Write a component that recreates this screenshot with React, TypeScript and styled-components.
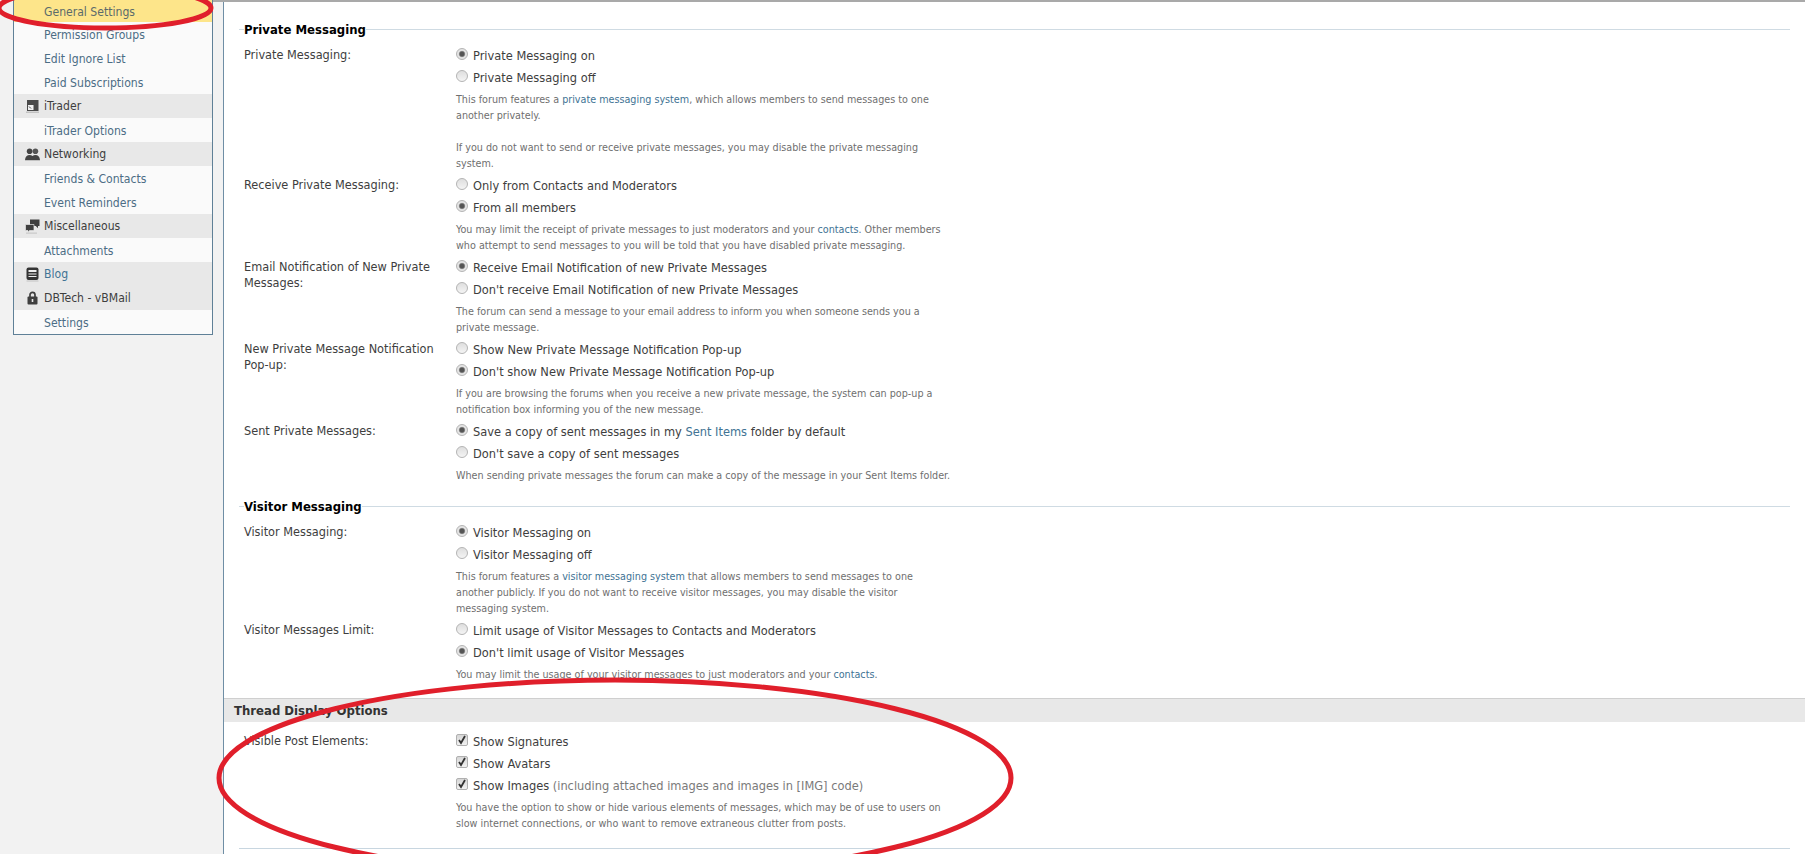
import React, { ReactNode } from 'react';
import styled, { createGlobalStyle } from 'styled-components';

const GlobalStyle = createGlobalStyle`
  html, body {
    margin: 0;
    padding: 0;
    background: #f2f2f2;
  }
  body {
    font-family: "DejaVu Sans Condensed", "DejaVu Sans", sans-serif;
    font-stretch: condensed;
    font-size: 12px;
    color: #3e3e3e;
  }
`;

const Page = styled.div`
  position: relative;
  display: flex;
  height: 854px;
  padding-left: 13px;
  box-sizing: border-box;
  overflow: hidden;
`;

const Sidebar = styled.nav`
  flex: none;
  width: 200px;
  height: 335px;
  box-sizing: border-box;
  border: 1px solid #5f8097;
  border-top: 0;
  background: #fafafa;
  font-size: 12.1px;
`;

const NavHeader = styled.div<{ $link?: boolean }>`
  display: flex;
  align-items: center;
  height: 24px;
  padding-left: 11px;
  background: #e8e8e8;
  color: ${(p) => (p.$link ? '#417394' : '#3e3e3e')};
`;

const NavItem = styled.div<{ $active?: boolean; $height?: number }>`
  display: flex;
  align-items: center;
  height: ${(p) => p.$height || 24}px;
  box-sizing: border-box;
  padding: 1px 0 0 30px;
  background: ${(p) => (p.$active ? '#fde58a' : 'transparent')};
  color: ${(p) => (p.$active ? '#5b6b6b' : '#4c6d85')};
`;

const IconBox = styled.svg`
  flex: none;
  width: 15px;
  height: 16px;
  margin: 0 4px 0 0;
`;

const Content = styled.div`
  flex: 1;
  display: flex;
  padding-left: 10px;
  border-top: 2px solid #a9a9a9;
`;

const Panel = styled.main`
  flex: 1;
  background: #fff;
  border-left: 1px solid #6f8ea5;
`;

const ClippedTop = styled.div`
  height: 3px;
  padding-left: 232px;
  overflow: hidden;
  display: flex;
  align-items: flex-end;
  font-size: 10.7px;
  line-height: 16px;
  color: #6f6f6f;
`;

const Section = styled.section`
  padding: 0 15px 0 15px;
`;

const SectionTitle = styled.h3<{ $top: number }>`
  display: flex;
  align-items: center;
  height: 18px;
  margin: ${(p) => p.$top}px 0 6px;
  font-size: 13px;
  font-weight: bold;
  color: #000;
  &::before {
    content: '';
    width: 5px;
    height: 1px;
    background: #cfdbe3;
  }
  &::after {
    content: '';
    flex: 1;
    height: 1px;
    background: #cfdbe3;
  }
`;

const Row = styled.div`
  display: grid;
  grid-template-columns: 217px 1fr;
  padding-bottom: 2px;
`;

const RowLabel = styled.div`
  padding: 3px 0 0 5px;
  width: 190px;
  font-size: 12.6px;
  line-height: 16px;
`;

const Option = styled.label`
  display: flex;
  align-items: center;
  height: 22px;
  gap: 5px;
  font-size: 12.7px;
`;

const Radio = styled.input.attrs({ type: 'radio' })`
  appearance: none;
  flex: none;
  width: 12px;
  height: 12px;
  margin: -3px 0 0;
  border: 1px solid #b4b4b4;
  border-radius: 50%;
  box-sizing: border-box;
  background: linear-gradient(#dedede, #f4f4f4);
  &:checked {
    background: radial-gradient(circle, #555 0 2px, #8f8f8f 2.8px, #e4e4e4 3.6px);
  }
`;

const Tick = styled.span`
  flex: none;
  display: flex;
  align-items: center;
  justify-content: center;
  width: 12px;
  height: 12px;
  margin-top: -3px;
  border: 1px solid #b0b0b0;
  border-radius: 2px;
  box-sizing: border-box;
  background: linear-gradient(#d6d6d6, #f2f2f2);
`;

const Note = styled.span`
  color: #7a7a7a;
`;

const Description = styled.p`
  margin: 4px 0 0;
  font-size: 10.7px;
  line-height: 16px;
  color: #6f6f6f;
  white-space: nowrap;
`;

const Link = styled.a`
  color: #417394;
`;

const BandHeader = styled.h2`
  display: flex;
  align-items: center;
  height: 23px;
  margin: 13px 0 8px;
  padding-left: 10px;
  border-top: 1px solid #cfcfcf;
  background: #e8e8e8;
  font-size: 13px;
  font-weight: bold;
  color: #333;
`;

const BottomRule = styled.hr`
  margin: 14px 0 0;
  border: 0;
  border-top: 1px solid #c8d6e0;
`;

const Annotations = styled.svg`
  position: absolute;
  left: 0;
  top: 0;
  width: 1805px;
  height: 854px;
  pointer-events: none;
`;

const TraderIcon = () => (
  <IconBox viewBox="0 0 15 16">
    <rect x="2" y="2" width="11.5" height="11" fill="#4a4a4a" />
    <rect x="3" y="7" width="5.5" height="5" fill="#f2f2f2" />
    <path d="M4 8.5l2 2" stroke="#4a4a4a" fill="none" />
    <rect x="1" y="13.5" width="13" height="1.5" fill="#c2c2c2" />
  </IconBox>
);

const PeopleIcon = () => (
  <IconBox viewBox="0 0 15 16">
    <circle cx="4.6" cy="5.2" r="2.8" fill="#444" />
    <circle cx="10.4" cy="5.2" r="2.8" fill="#555" />
    <path d="M0 14c.3-3.2 2-5 4.6-5 1.2 0 2.2.4 2.9 1.1.7-.7 1.7-1.1 2.9-1.1 2.6 0 4.3 1.8 4.6 5z" fill="#444" />
    <rect x="0" y="14" width="15" height="1" fill="#c2c2c2" />
  </IconBox>
);

const BubblesIcon = () => (
  <IconBox viewBox="0 0 15 16">
    <path d="M5 1.5h9.500v6.500H13v2.200L10.800 8H5z" fill="#3f3f3f" />
    <path d="M.5 6.500H9v6H4.500L3 14.300v-1.800H.5z" fill="#3f3f3f" stroke="#e8e8e8" strokeWidth=".7" />
    <rect x="1" y="14.6" width="11" height="1" fill="#c2c2c2" />
  </IconBox>
);

const BlogIcon = () => (
  <IconBox viewBox="0 0 15 16">
    <rect x="1.5" y="1.5" width="12" height="12.5" rx="2" fill="#333" />
    <rect x="3.5" y="4" width="8" height="2" fill="#eee" />
    <path d="M3.500 8h8M3.500 10.500h8" stroke="#eee" strokeWidth="1.1" />
    <rect x="1.5" y="14.5" width="12" height="1" fill="#c2c2c2" />
  </IconBox>
);

const LockIcon = () => (
  <IconBox viewBox="0 0 15 16">
    <path d="M5 7V4.800a2.500 2.500 0 0 1 5 0V7" stroke="#3f3f3f" strokeWidth="1.7" fill="none" />
    <rect x="2.5" y="6.5" width="10" height="8" rx="1" fill="#3f3f3f" />
    <rect x="6.7" y="9" width="1.6" height="3" fill="#e8e8e8" />
  </IconBox>
);

const Check = () => (
  <svg width="10" height="10" viewBox="0 0 10 10">
    <path d="M2 5l2 3 4-7" stroke="#333" strokeWidth="1.8" fill="none" />
  </svg>
);

const RadioOption = ({ name, checked, children }: { name: string; checked?: boolean; children: ReactNode }) => (
  <Option>
    <Radio name={name} defaultChecked={checked} />
    <span>{children}</span>
  </Option>
);

const CheckOption = ({ children }: { children: ReactNode }) => (
  <Option>
    <Tick><Check /></Tick>
    <span>{children}</span>
  </Option>
);

const App = () => (
  <Page>
    <GlobalStyle />
    <Sidebar>
      <NavItem $active $height={22}>General Settings</NavItem>
      <NavItem>Permission Groups</NavItem>
      <NavItem>Edit Ignore List</NavItem>
      <NavItem>Paid Subscriptions</NavItem>
      <NavHeader><TraderIcon />iTrader</NavHeader>
      <NavItem>iTrader Options</NavItem>
      <NavHeader><PeopleIcon />Networking</NavHeader>
      <NavItem>Friends &amp; Contacts</NavItem>
      <NavItem>Event Reminders</NavItem>
      <NavHeader><BubblesIcon />Miscellaneous</NavHeader>
      <NavItem>Attachments</NavItem>
      <NavHeader $link><BlogIcon />Blog</NavHeader>
      <NavHeader><LockIcon />DBTech - vBMail</NavHeader>
      <NavItem>Settings</NavItem>
    </Sidebar>
    <Content>
      <Panel>
        <ClippedTop>thread.</ClippedTop>
        <Section>
          <SectionTitle $top={15}>Private Messaging</SectionTitle>
          <Row>
            <RowLabel>Private Messaging:</RowLabel>
            <div>
              <RadioOption name="pm" checked>Private Messaging on</RadioOption>
              <RadioOption name="pm">Private Messaging off</RadioOption>
              <Description>
                This forum features a <Link>private messaging system</Link>, which allows members to send messages to one<br />
                another privately.<br />
                <br />
                If you do not want to send or receive private messages, you may disable the private messaging<br />
                system.
              </Description>
            </div>
          </Row>
          <Row>
            <RowLabel>Receive Private Messaging:</RowLabel>
            <div>
              <RadioOption name="receive">Only from Contacts and Moderators</RadioOption>
              <RadioOption name="receive" checked>From all members</RadioOption>
              <Description>
                You may limit the receipt of private messages to just moderators and your <Link>contacts</Link>. Other members<br />
                who attempt to send messages to you will be told that you have disabled private messaging.
              </Description>
            </div>
          </Row>
          <Row>
            <RowLabel>Email Notification of New Private Messages:</RowLabel>
            <div>
              <RadioOption name="email" checked>Receive Email Notification of new Private Messages</RadioOption>
              <RadioOption name="email">Don't receive Email Notification of new Private Messages</RadioOption>
              <Description>
                The forum can send a message to your email address to inform you when someone sends you a<br />
                private message.
              </Description>
            </div>
          </Row>
          <Row>
            <RowLabel>New Private Message Notification Pop-up:</RowLabel>
            <div>
              <RadioOption name="popup">Show New Private Message Notification Pop-up</RadioOption>
              <RadioOption name="popup" checked>Don't show New Private Message Notification Pop-up</RadioOption>
              <Description>
                If you are browsing the forums when you receive a new private message, the system can pop-up a<br />
                notification box informing you of the new message.
              </Description>
            </div>
          </Row>
          <Row>
            <RowLabel>Sent Private Messages:</RowLabel>
            <div>
              <RadioOption name="sent" checked>Save a copy of sent messages in my <Link>Sent Items</Link> folder by default</RadioOption>
              <RadioOption name="sent">Don't save a copy of sent messages</RadioOption>
              <Description>When sending private messages the forum can make a copy of the message in your Sent Items folder.</Description>
            </div>
          </Row>
          <SectionTitle $top={11}>Visitor Messaging</SectionTitle>
          <Row>
            <RowLabel>Visitor Messaging:</RowLabel>
            <div>
              <RadioOption name="vm" checked>Visitor Messaging on</RadioOption>
              <RadioOption name="vm">Visitor Messaging off</RadioOption>
              <Description>
                This forum features a <Link>visitor messaging system</Link> that allows members to send messages to one<br />
                another publicly. If you do not want to receive visitor messages, you may disable the visitor<br />
                messaging system.
              </Description>
            </div>
          </Row>
          <Row>
            <RowLabel>Visitor Messages Limit:</RowLabel>
            <div>
              <RadioOption name="limit">Limit usage of Visitor Messages to Contacts and Moderators</RadioOption>
              <RadioOption name="limit" checked>Don't limit usage of Visitor Messages</RadioOption>
              <Description>
                You may limit the usage of your visitor messages to just moderators and your <Link>contacts</Link>.
              </Description>
            </div>
          </Row>
        </Section>
        <BandHeader>Thread Display Options</BandHeader>
        <Section>
          <Row>
            <RowLabel>Visible Post Elements:</RowLabel>
            <div>
              <CheckOption>Show Signatures</CheckOption>
              <CheckOption>Show Avatars</CheckOption>
              <CheckOption>Show Images <Note>(including attached images and images in [IMG] code)</Note></CheckOption>
              <Description>
                You have the option to show or hide various elements of messages, which may be of use to users on<br />
                slow internet connections, or who want to remove extraneous clutter from posts.
              </Description>
            </div>
          </Row>
          <BottomRule />
        </Section>
      </Panel>
    </Content>
    <Annotations viewBox="0 0 1805 854">
      <ellipse cx="105" cy="8" rx="106" ry="20" fill="none" stroke="#e01f2b" strokeWidth="5" />
      <ellipse cx="615" cy="778" rx="396" ry="98" fill="none" stroke="#e01f2b" strokeWidth="5" />
    </Annotations>
  </Page>
);

export default App;
